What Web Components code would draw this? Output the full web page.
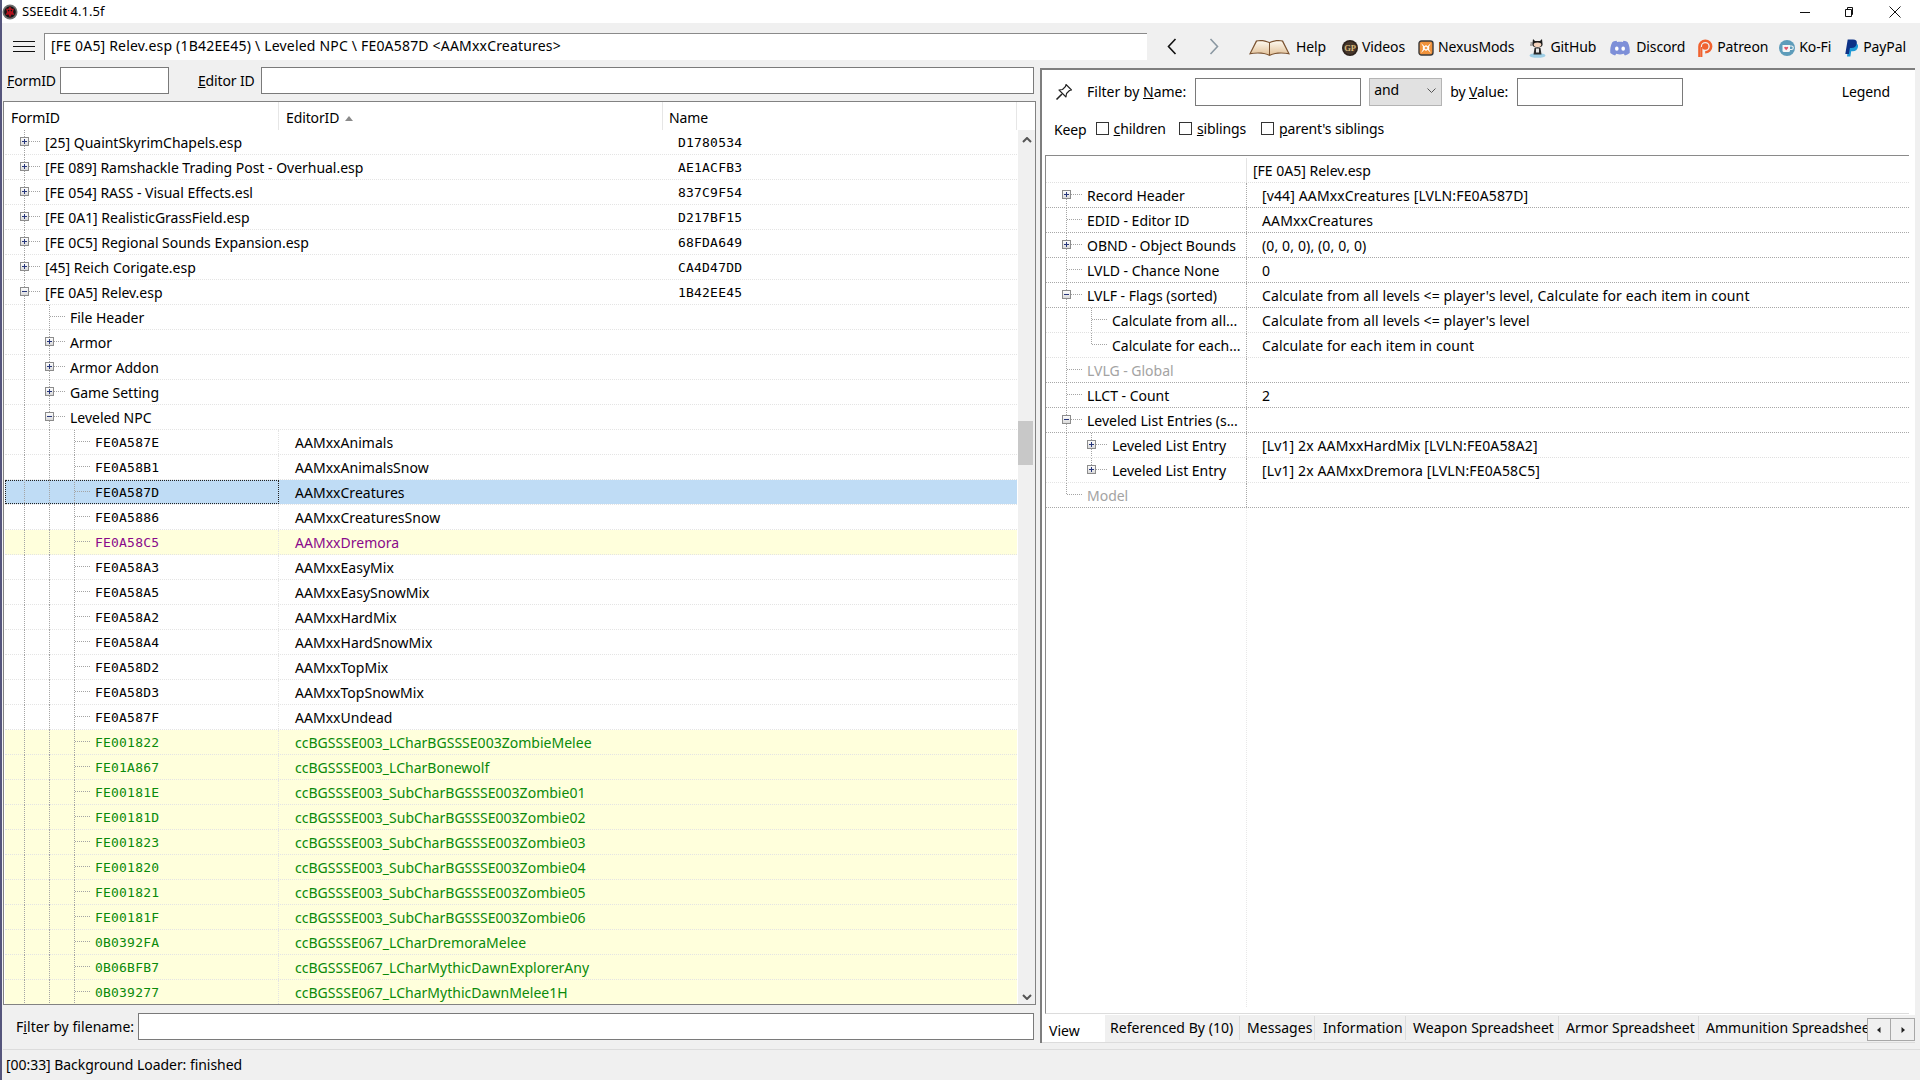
<!DOCTYPE html>
<html>
<head>
<meta charset="utf-8">
<title>SSEEdit</title>
<style>
  html, body { margin: 0; padding: 0; height: 100%; overflow: hidden; background: #f0f0f0; }
  body { font: 14px/1.2 "Noto Sans", "Open Sans", sans-serif; color: #000; letter-spacing: -0.12px; }
</style>
</head>
<body>
<sse-app></sse-app>

<script>
const BOX = (sign) => `<svg width="9" height="9" viewBox="0 0 9 9" style="display:block">
  <defs><linearGradient id="g" x1="0" y1="0" x2="0" y2="1"><stop offset="0" stop-color="#fff"/><stop offset="1" stop-color="#d8d8d8"/></linearGradient></defs>
  <rect x=".5" y=".5" width="8" height="8" fill="url(#g)" stroke="#8c8c8c"/>
  <path d="M2 4.500h5${sign === '+' ? 'M4.500 2v5' : ''}" stroke="#27367a" fill="none"/></svg>`;

// one level of tree connectors, used by both trees
class TreeIndent extends HTMLElement {
  connectedCallback() {
    const guides = (this.getAttribute('guides') || '').split(' ').filter(Boolean);
    const exp = this.getAttribute('exp');
    const end = this.hasAttribute('end');
    const top = this.hasAttribute('top');
    const pad = this.getAttribute('pad') || '15';
    const color = this.getAttribute('line') || '#a4a4a4';
    this.attachShadow({ mode: 'open' });
    this.shadowRoot.innerHTML = `
      <style>
        :host { display: flex; height: 100%; flex: none; padding-left: ${pad}px; }
        .cell { width: 25px; height: 100%; position: relative; flex: none; }
        .v { position: absolute; left: 4px; top: 0; bottom: -1px; border-left: 1px dotted ${color}; }
        .v.half { bottom: 13px; }
        .v.low { top: 11px; }
        .h { position: absolute; left: 5px; top: 11px; width: 15px; border-top: 1px dotted ${color}; }
        .box { position: absolute; left: 0; top: 7px; }
      </style>
      ${guides.map(g => `<div class="cell">${g === '1' ? '<div class="v"></div>' : ''}</div>`).join('')}
      <div class="cell">
        <div class="v ${end ? 'half' : ''} ${top ? 'low' : ''}"></div>
        <div class="h"></div>
        ${exp ? `<div class="box">${BOX(exp)}</div>` : ''}
      </div>`;
  }
}
customElements.define('tree-indent', TreeIndent);

class ToolLink extends HTMLElement {
  connectedCallback() {
    this.attachShadow({ mode: 'open' });
    this.shadowRoot.innerHTML = `
      <style>
        :host { display: flex; align-items: center; gap: var(--gap, 4px); height: 100%; flex: none; }
        ::slotted(svg) { display: block; flex: none; }
      </style>
      <slot name="icon"></slot><slot></slot>`;
  }
}
customElements.define('tool-link', ToolLink);

class CheckOption extends HTMLElement {
  connectedCallback() {
    this.attachShadow({ mode: 'open' });
    this.shadowRoot.innerHTML = `
      <style>
        :host { display: flex; align-items: center; gap: 5px; flex: none; }
        i { display: block; width: 11px; height: 11px; border: 1px solid #333; background: #fff; }
      </style>
      <i></i><span><slot></slot></span>`;
  }
}
customElements.define('check-option', CheckOption);

class TitleBar extends HTMLElement {
  connectedCallback() {
    this.attachShadow({ mode: 'open' });
    this.shadowRoot.innerHTML = `
      <style>
        :host { display: flex; align-items: center; height: 23px; background: #fff; flex: none; font-size: 13px; letter-spacing: .05px; }
        .logo { margin-right: 4px; flex: none; display: block; }
        .title { flex: 1; }
        .caps { display: flex; align-items: center; }
        .caps svg { display: block; }
      </style>
      <svg class="logo" width="16" height="16" viewBox="0 0 16 16">
        <circle cx="8" cy="8" r="7.500" fill="#6e6e6e"/>
        <circle cx="8" cy="8" r="5.800" fill="#161616"/>
        <path d="M8 2.500 10 5 12 4.500 11 8 12.500 11 9.500 10.500 8 13.500 6.500 10.500 3.500 11 5 8 4 4.500 6 5Z" fill="#b3121d"/>
        <circle cx="6.600" cy="6.600" r=".8" fill="#111"/><circle cx="9.400" cy="6.600" r=".8" fill="#111"/>
      </svg>
      <div class="title">SSEEdit 4.1.5f</div>
      <div class="caps">
        <svg width="12" height="12" viewBox="0 0 12 12" style="margin-right:32px"><path d="M1 6.500h10" stroke="#111" fill="none"/></svg>
        <svg width="12" height="12" viewBox="0 0 12 12" style="margin-right:34px"><path d="M2.500 3.500h6v7h-6zM4.500 3.500v-2h5v7h-1" stroke="#111" fill="none"/></svg>
        <svg width="12" height="12" viewBox="0 0 12 12" style="margin-right:19px"><path d="M.5.5l11 11M11.500.5l-11 11" stroke="#111" fill="none"/></svg>
      </div>`;
  }
}
customElements.define('title-bar', TitleBar);

class MainToolbar extends HTMLElement {
  connectedCallback() {
    this.attachShadow({ mode: 'open' });
    this.shadowRoot.innerHTML = `
      <style>
        :host { display: flex; align-items: flex-start; height: 44px; flex: none; background: #f0f0f0; }
        .burger { width: 22px; height: 11px; margin: 18px 9px 0 11px; border-top: 1px solid #111; border-bottom: 1px solid #111; position: relative; flex: none; box-sizing: border-box; }
        .burger::after { content: ""; position: absolute; left: 0; right: 0; top: 4px; border-top: 1px solid #111; }
        .path { width: 1103px; height: 27px; margin-top: 10px; box-sizing: border-box; background: #fff; border-top: 1px solid #8a8a8a; border-left: 1px solid #8a8a8a; padding-left: 6px; line-height: 23px; flex: none; letter-spacing: .19px; }
        .nav { display: block; margin-top: 15px; flex: none; }
        .links { display: flex; height: 44px; align-items: center; padding-top: 5px; box-sizing: border-box; }
      </style>
      <div class="burger"></div>
      <div class="path">[FE 0A5] Relev.esp (1B42EE45) \\ Leveled NPC \\ FE0A587D &lt;AAMxxCreatures&gt;</div>
      <svg class="nav" style="margin-left:20px" width="10" height="17" viewBox="0 0 10 17"><path d="M8.500 1 1.500 8.500l7 7.500" fill="none" stroke="#111" stroke-width="1.600"/></svg>
      <svg class="nav" style="margin-left:32px" width="10" height="17" viewBox="0 0 10 17"><path d="M1.500 1l7 7.500-7 7.500" fill="none" stroke="#8b98a2" stroke-width="1.600"/></svg>
      <div class="links" style="margin-left:29px"><slot></slot></div>`;
  }
}
customElements.define('main-toolbar', MainToolbar);

const FORM_ROWS = [
  [0, '+', '[25] QuaintSkyrimChapels.esp', '', 'D1780534'],
  [0, '+', '[FE 089] Ramshackle Trading Post - Overhual.esp', '', 'AE1ACFB3'],
  [0, '+', '[FE 054] RASS - Visual Effects.esl', '', '837C9F54'],
  [0, '+', '[FE 0A1] RealisticGrassField.esp', '', 'D217BF15'],
  [0, '+', '[FE 0C5] Regional Sounds Expansion.esp', '', '68FDA649'],
  [0, '+', '[45] Reich Corigate.esp', '', 'CA4D47DD'],
  [0, '-', '[FE 0A5] Relev.esp', '', '1B42EE45'],
  [1, '', 'File Header'],
  [1, '+', 'Armor'],
  [1, '+', 'Armor Addon'],
  [1, '+', 'Game Setting'],
  [1, '-', 'Leveled NPC'],
  [2, '', 'FE0A587E', 'AAMxxAnimals'],
  [2, '', 'FE0A58B1', 'AAMxxAnimalsSnow'],
  [2, '', 'FE0A587D', 'AAMxxCreatures', '', 'sel'],
  [2, '', 'FE0A5886', 'AAMxxCreaturesSnow'],
  [2, '', 'FE0A58C5', 'AAMxxDremora', '', 'purple'],
  [2, '', 'FE0A58A3', 'AAMxxEasyMix'],
  [2, '', 'FE0A58A5', 'AAMxxEasySnowMix'],
  [2, '', 'FE0A58A2', 'AAMxxHardMix'],
  [2, '', 'FE0A58A4', 'AAMxxHardSnowMix'],
  [2, '', 'FE0A58D2', 'AAMxxTopMix'],
  [2, '', 'FE0A58D3', 'AAMxxTopSnowMix'],
  [2, '', 'FE0A587F', 'AAMxxUndead'],
  [2, '', 'FE001822', 'ccBGSSSE003_LCharBGSSSE003ZombieMelee', '', 'green'],
  [2, '', 'FE01A867', 'ccBGSSSE003_LCharBonewolf', '', 'green'],
  [2, '', 'FE00181E', 'ccBGSSSE003_SubCharBGSSSE003Zombie01', '', 'green'],
  [2, '', 'FE00181D', 'ccBGSSSE003_SubCharBGSSSE003Zombie02', '', 'green'],
  [2, '', 'FE001823', 'ccBGSSSE003_SubCharBGSSSE003Zombie03', '', 'green'],
  [2, '', 'FE001820', 'ccBGSSSE003_SubCharBGSSSE003Zombie04', '', 'green'],
  [2, '', 'FE001821', 'ccBGSSSE003_SubCharBGSSSE003Zombie05', '', 'green'],
  [2, '', 'FE00181F', 'ccBGSSSE003_SubCharBGSSSE003Zombie06', '', 'green'],
  [2, '', '0B0392FA', 'ccBGSSSE067_LCharDremoraMelee', '', 'green'],
  [2, '', '0B06BFB7', 'ccBGSSSE067_LCharMythicDawnExplorerAny', '', 'green'],
  [2, '', '0B039277', 'ccBGSSSE067_LCharMythicDawnMelee1H', '', 'green'],
];

class FormTree extends HTMLElement {
  connectedCallback() {
    const rows = FORM_ROWS.map(([lvl, exp, a, b, c, kind]) => {
      const guides = Array(lvl).fill('1').join(' ');
      return `<div class="row ${kind || ''} ${lvl === 2 ? 'rec' : ''}">
        <div class="c1"><tree-indent guides="${guides}" ${exp ? `exp="${exp}"` : ''}></tree-indent><span class="${lvl === 2 ? 'mono' : ''}">${a}</span></div>
        <div class="c2">${b || ''}</div>
        <div class="c3">${c || ''}</div>
      </div>`;
    }).join('');
    this.attachShadow({ mode: 'open' });
    this.shadowRoot.innerHTML = `
      <style>
        :host { display: flex; flex-direction: column; flex: 1; min-height: 0; border: 1px solid #828282; background: #fff; position: relative; overflow: hidden; }
        .head { display: flex; height: 28px; flex: none; line-height: 31px; padding-left: 1px; }
        .head div { box-sizing: border-box; border-right: 1px solid #e6e6e6; flex: none; height: 28px; }
        .head .h1 { width: 274px; padding-left: 6px; }
        .head .h2 { width: 384px; padding-left: 7px; }
        .head .h3 { width: 354px; padding-left: 6px; }
        .sort { display: inline-block; width: 0; height: 0; border: 4.500px solid transparent; border-top: 0; border-bottom: 5px solid #8a8a8a; margin: 0 0 2px 6px; }
        .body { flex: 1; min-height: 0; display: flex; }
        .list { width: 1013px; flex: none; overflow: hidden; padding-left: 1px; box-sizing: border-box; }
        .row { display: flex; height: 25px; box-sizing: border-box; border-bottom: 1px dotted #e4e4e4; line-height: 26px; white-space: nowrap; }
        .c1 { width: 274px; flex: none; display: flex; box-sizing: border-box; letter-spacing: -.02px; }
        .c2 { width: 384px; flex: none; box-sizing: border-box; padding-left: 16px; letter-spacing: .02px; }
        .c3 { flex: 1; box-sizing: border-box; padding-left: 15px; font: 13px/25px "DejaVu Sans Mono", "Liberation Mono", monospace; letter-spacing: .2px; }
        .rec .c1 { border-right: 1px dotted #e4e4e4; }
        .mono { font: 13px/25px "DejaVu Sans Mono", "Liberation Mono", monospace; letter-spacing: .2px; }
        .sel .c2, .sel .c3 { background: #bfdcf5; }
        .sel .c1 { background: #bfdcf5; outline: 1px dotted #222; outline-offset: -1px; }
        .purple, .green { background: #ffffdc; }
        .purple { color: #8a0a8a; }
        .green { color: #0a8a0a; }
        .bar { width: 17px; flex: none; margin-left: 1px; background: #f0f0f0; display: flex; flex-direction: column; align-items: center; position: relative; }
        .bar svg { display: block; flex: none; }
        .thumb { position: absolute; left: 0; width: 15px; top: 291px; height: 44px; background: #c8c8c8; }
      </style>
      <div class="head">
        <div class="h1">FormID</div>
        <div class="h2">EditorID<span class="sort"></span></div>
        <div class="h3">Name</div>
      </div>
      <div class="body">
        <div class="list">${rows}</div>
        <div class="bar">
          <svg style="margin-top:7px" width="10" height="6" viewBox="0 0 10 6"><path d="M1 5l4-4 4 4" fill="none" stroke="#555" stroke-width="2"/></svg>
          <div class="thumb"></div>
          <div style="flex:1"></div>
          <svg style="margin-bottom:4px" width="10" height="6" viewBox="0 0 10 6"><path d="M1 1l4 4 4-4" fill="none" stroke="#555" stroke-width="2"/></svg>
        </div>
      </div>`;
  }
}
customElements.define('form-tree', FormTree);

class LeftPane extends HTMLElement {
  connectedCallback() {
    this.attachShadow({ mode: 'open' });
    this.shadowRoot.innerHTML = `
      <style>
        :host { display: flex; flex-direction: column; width: 1034px; flex: none; padding-left: 1px; box-sizing: border-box; }
        .top, .bot { display: flex; align-items: center; height: 27px; flex: none; }
        .top { margin-bottom: 7px; }
        .bot { margin: 8px 0 9px; letter-spacing: .05px; }
        .top span, .bot span { padding-top: 2px; }
        input { display: block; box-sizing: border-box; height: 27px; border: 1px solid #7a7a7a; background: #fff; margin: 0; padding: 0; flex: none; }
        u { text-underline-offset: 1px; }
      </style>
      <div class="top">
        <span style="margin-left:4px"><u>F</u>ormID</span>
        <input style="width:109px;margin-left:4px">
        <span style="margin-left:29px"><u>E</u>ditor ID</span>
        <input style="width:773px;margin-left:6px">
      </div>
      <form-tree></form-tree>
      <div class="bot">
        <span style="margin-left:13px">F<u>i</u>lter by filename:</span>
        <input style="width:896px;margin-left:4px">
      </div>`;
  }
}
customElements.define('left-pane', LeftPane);

const RECORD_ROWS = [
  ['h', '', '', '', '[FE 0A5] Relev.esp'],
  [0, '+', 'Record Header', 'top', '[v44] AAMxxCreatures [LVLN:FE0A587D]'],
  [0, '', 'EDID - Editor ID', '', 'AAMxxCreatures'],
  [0, '+', 'OBND - Object Bounds', '', '(0, 0, 0), (0, 0, 0)'],
  [0, '', 'LVLD - Chance None', '', '0'],
  [0, '-', 'LVLF - Flags (sorted)', '', "Calculate from all levels <= player's level, Calculate for each item in count"],
  [1, '', 'Calculate from all...', '', "Calculate from all levels <= player's level"],
  [1, '', 'Calculate for each...', 'end', 'Calculate for each item in count'],
  [0, '', 'LVLG - Global', 'off', ''],
  [0, '', 'LLCT - Count', '', '2'],
  [0, '-', 'Leveled List Entries (s...', '', ''],
  [1, '+', 'Leveled List Entry', '', '[Lv1] 2x AAMxxHardMix [LVLN:FE0A58A2]'],
  [1, '+', 'Leveled List Entry', 'end', '[Lv1] 2x AAMxxDremora [LVLN:FE0A58C5]'],
  [0, '', 'Model', 'end off', ''],
];

class RecordView extends HTMLElement {
  connectedCallback() {
    const esc = s => s.replace(/&/g, '&amp;').replace(/</g, '&lt;');
    const rows = RECORD_ROWS.map(([lvl, exp, label, flags, value]) => {
      if (lvl === 'h') return `<div class="row head"><div class="k"></div><div class="val hv">${esc(value)}</div></div>`;
      const top = flags.includes('top') ? 'top' : '';
      const end = flags.includes('end') ? 'end' : '';
      const off = flags.includes('off') ? 'off' : '';
      const guides = lvl ? '1' : '';
      return `<div class="row ${lvl ? 'kid' : ''} ${off}">
        <div class="k"><tree-indent pad="12" guides="${guides}" ${exp ? `exp="${exp}"` : ''} ${top} ${end}></tree-indent><span>${esc(label)}</span></div>
        <div class="val">${esc(value)}</div>
      </div>`;
    }).join('');
    this.attachShadow({ mode: 'open' });
    this.shadowRoot.innerHTML = `
      <style>
        :host { display: flex; flex-direction: column; flex: 1; min-height: 0; border-top: 1px solid #8a8a8a; border-left: 1px solid #8a8a8a; border-bottom: 1px solid #dcdcdc; margin: 0 6px 0 3px; padding-top: 2px; background: #fff; }
        .row { display: flex; height: 25px; box-sizing: border-box; flex: none; line-height: 26px; border-bottom: 1px dotted #a8a8a8; white-space: nowrap; }
        .row.kid, .row.head { border-bottom-color: #e0e0e0; }
        .row:nth-child(14) { border-bottom-color: #e4e4e4; }
        .k { width: 201px; flex: none; display: flex; box-sizing: border-box; border-right: 1px dotted #a8a8a8; overflow: hidden; padding-left: 4px; letter-spacing: -.02px; }
        .head .k { border-right: 1px solid #e4e4e4; }
        .val { padding-left: 15px; flex: 1; letter-spacing: .13px; }
        .val.hv { padding-left: 6px; letter-spacing: 0; }
        .off { color: #a3a3a3; }
        .fill { flex: 1; margin-bottom: 6px; }
        .fill div { width: 201px; height: 100%; box-sizing: border-box; border-right: 1px dotted #e8e8e8; }
      </style>
      ${rows}
      <div class="fill"><div></div></div>`;
  }
}
customElements.define('record-view', RecordView);

class TabStrip extends HTMLElement {
  connectedCallback() {
    const tabs = [['View', 63, 7], ['Referenced By (10)', 135, 5], ['Messages', 75, 7], ['Information', 91, 8], ['Weapon Spreadsheet', 153, 7], ['Armor Spreadsheet', 140, 7], ['Ammunition Spreadsheet', 168, 7]];
    this.attachShadow({ mode: 'open' });
    this.shadowRoot.innerHTML = `
      <style>
        :host { display: flex; height: 28px; flex: none; background: #f0f0f0; border-bottom: 1px solid #dcdcdc; box-sizing: border-box; margin-top: 1px; letter-spacing: .04px; }
        .tab { box-sizing: border-box; flex: none; height: 24px; margin-top: 1px; line-height: 24px; border-right: 1px solid #dcdcdc; white-space: nowrap; overflow: hidden; }
        .tab.on { background: #fff; height: 27px; margin-top: 0; line-height: 32px; border-right: 0; }
        .tab:last-of-type { border-right: 0; }
        .tabs { display: flex; width: 825px; flex: none; overflow: hidden; }
        .btn { width: 24px; height: 23px; box-sizing: border-box; margin-top: 3px; border: 1px solid #a8a8a8; background: #f0f0f0; display: flex; align-items: center; justify-content: center; flex: none; }
        .btn + .btn { border-left: 0; }
      </style>
      <div class="tabs">
        ${tabs.map(([t, w, p], i) => `<div class="tab ${i ? '' : 'on'}" style="width:${w}px;padding-left:${p}px">${t}</div>`).join('')}
      </div>
      <div class="btn"><svg width="4" height="6" viewBox="0 0 4 6"><path d="M3.500 0v6L0 3z" fill="#222"/></svg></div>
      <div class="btn"><svg width="4" height="6" viewBox="0 0 4 6"><path d="M.5 0v6L4 3z" fill="#222"/></svg></div>`;
  }
}
customElements.define('tab-strip', TabStrip);

class RightPane extends HTMLElement {
  connectedCallback() {
    this.attachShadow({ mode: 'open' });
    this.shadowRoot.innerHTML = `
      <style>
        :host { display: flex; flex-direction: column; width: 875px; flex: none; margin: 1px 0 6px 4px; box-sizing: border-box; border-left: 2px solid #7e7e7e; border-top: 2px solid #7e7e7e; background: #fff; }
        .filter { display: flex; align-items: center; height: 35px; margin-top: 4px; flex: none; }
        .filter span { padding-top: 2px; }
        .keep { display: flex; align-items: center; height: 24px; margin: 8px 0 14px; flex: none; }
        input { display: block; box-sizing: border-box; height: 28px; border: 1px solid #7a7a7a; background: #fff; margin: 0; padding: 0; flex: none; }
        .select { box-sizing: border-box; width: 73px; height: 28px; border: 1px solid #b4b4b4; background: #e1e1e1; display: flex; align-items: center; justify-content: space-between; padding: 0 5px 3px 4px; margin-left: 8px; flex: none; }
        .select span { padding-top: 0; }
        .pin { display: block; flex: none; }
        .legend { margin-left: auto; margin-right: 25px; }
        u { text-underline-offset: 1px; }
      </style>
      <div class="filter">
        <svg class="pin" style="margin-left:13px" width="18" height="18" viewBox="0 0 18 18">
          <path d="M11 1.500 16.500 7 14.500 7.500 11.500 10.500 11 14 4 7 7.500 6.500 10.500 3.500Z" fill="#fff" stroke="#222" stroke-width="1.100" stroke-linejoin="round"/>
          <path d="M7 11 1.500 16.500" stroke="#222" stroke-width="1.600" fill="none"/>
        </svg>
        <span style="margin-left:14px;letter-spacing:0">Filter by <u>N</u>ame:</span>
        <input style="width:166px;margin-left:9px">
        <div class="select"><span>and</span><svg width="9" height="5" viewBox="0 0 9 5"><path d="M.5.5l4 4 4-4" fill="none" stroke="#555"/></svg></div>
        <span style="margin-left:8px">by <u>V</u>alue:</span>
        <input style="width:166px;margin-left:9px">
        <span class="legend">Legend</span>
      </div>
      <div class="keep">
        <span style="margin-left:12px;padding-top:3px">Keep</span>
        <check-option style="margin-left:9px"><u>c</u>hildren</check-option>
        <check-option style="margin-left:13px"><u>s</u>iblings</check-option>
        <check-option style="margin-left:15px"><u>p</u>arent's siblings</check-option>
      </div>
      <record-view></record-view>
      <tab-strip></tab-strip>`;
  }
}
customElements.define('right-pane', RightPane);

class StatusBar extends HTMLElement {
  connectedCallback() {
    this.attachShadow({ mode: 'open' });
    this.shadowRoot.innerHTML = `
      <style>
        :host { display: flex; align-items: center; height: 31px; flex: none; margin-left: 1px; border-top: 1px solid #dcdcdc; box-sizing: border-box; padding-left: 3px; background: #f0f0f0; letter-spacing: -.05px; }
      </style>
      <slot></slot>`;
  }
}
customElements.define('status-bar', StatusBar);

class SseApp extends HTMLElement {
  connectedCallback() {
    this.attachShadow({ mode: 'open' });
    this.shadowRoot.innerHTML = `
      <style>
        :host { display: flex; flex-direction: column; height: 1080px; box-sizing: border-box; border-left: 2px solid #55557c; background: #f0f0f0; }
        .main { display: flex; flex: 1; min-height: 0; }
      </style>
      <title-bar></title-bar>
      <main-toolbar>
        <tool-link style="--gap:5px">
          <svg slot="icon" width="43" height="18" viewBox="0 0 43 18">
            <defs><linearGradient id="pg" x1="0" y1="0" x2="0" y2="1"><stop offset="0" stop-color="#fdf8ee"/><stop offset="1" stop-color="#e2c29a"/></linearGradient></defs>
            <path d="M21.500 3C17 .5 11 .5 8 1.500L1 15.500C8 14 16 14 21.500 17 27 14 35 14 42 15.500L35 1.500C32 .5 26 .5 21.500 3Z" fill="#7a5230"/>
            <path d="M21 4C17 2 12 1.800 9 2.500L3 14C9 13 16 13 21 15.500Z" fill="url(#pg)"/>
            <path d="M22 4C26 2 31 1.800 34 2.500L40 14C34 13 27 13 22 15.500Z" fill="url(#pg)"/>
          </svg>
          Help
        </tool-link>
        <tool-link style="margin-left:16px">
          <svg slot="icon" width="16" height="16" viewBox="0 0 16 16">
            <circle cx="8" cy="8" r="8" fill="#2c221c"/><circle cx="8" cy="8" r="6.400" fill="#46362a"/>
            <text x="8" y="11" text-anchor="middle" font-family="Liberation Serif, serif" font-size="8.500" font-weight="700" fill="#d8b878">GP</text>
          </svg>
          Videos
        </tool-link>
        <tool-link style="margin-left:13px">
          <svg slot="icon" width="16" height="16" viewBox="0 0 16 16">
            <rect x="1" y="1" width="14" height="14" rx="2.500" fill="#f0923a" stroke="#3a3a3a" stroke-width="1.400"/>
            <path d="M3 3 6.500 6.200 8 5 9.500 6.200 13 3 10.800 7 11.500 8 10.800 9 13 13 9.500 9.800 8 11 6.500 9.800 3 13 5.200 9 4.500 8 5.200 7Z" fill="#fff"/>
            <path d="M6.400 8 8 6.400 9.600 8 8 9.600Z" fill="#f0923a"/>
          </svg>
          NexusMods
        </tool-link>
        <tool-link style="margin-left:15px">
          <svg slot="icon" width="17" height="20" viewBox="0 0 17 20">
            <ellipse cx="8.500" cy="17.500" rx="8" ry="2.300" fill="#9fcfe6"/>
            <path d="M4 1 6 3h5l2-2 .6 5.500c0 2-2 3.200-5.100 3.200S3.400 8.500 3.400 6.500Z" fill="#1c1c1c"/>
            <ellipse cx="8.500" cy="6.800" rx="3.800" ry="2.300" fill="#f3d3bd"/>
            <path d="M5.500 10h6l1 6.500h-8Z" fill="#2a2a2a"/>
            <path d="M7 10.500h3v4H7Z" fill="#e8e8e8"/>
            <path d="M1.500 5h2.500M1 7h2.500" stroke="#666" fill="none"/>
          </svg>
          GitHub
        </tool-link>
        <tool-link style="margin-left:14px;--gap:6px">
          <svg slot="icon" width="20" height="16" viewBox="0 0 20 16">
            <path d="M6.500 .8C4.500 1 3 1.600 2.300 2.300.5 5.500 0 9.500 .3 13c1.400 1.200 3 2 4.800 2.500l1.200-1.800c3 .9 4.400.9 7.400 0l1.200 1.800c1.800-.5 3.400-1.300 4.800-2.500.3-3.500-.2-7.500-2-10.700C17 1.600 15.500 1 13.500.8l-.7 1.200c-1.800-.2-3.800-.2-5.600 0Z" fill="#7d8fd8"/>
            <ellipse cx="6.800" cy="8.700" rx="1.800" ry="2.100" fill="#fff"/><ellipse cx="13.200" cy="8.700" rx="1.800" ry="2.100" fill="#fff"/>
          </svg>
          Discord
        </tool-link>
        <tool-link style="margin-left:12px">
          <svg slot="icon" width="16" height="20" viewBox="0 0 16 20">
            <path d="M2.500 19V8.500A5.800 5.800 0 1 1 8.200 14.300" fill="none" stroke="#f0622f" stroke-width="2.600"/>
            <circle cx="8.200" cy="8.500" r="3.200" fill="#f0622f"/>
            <path d="M4.700 19V9" stroke="#f0622f" stroke-width="1.400" fill="none"/>
          </svg>
          Patreon
        </tool-link>
        <tool-link style="margin-left:11px">
          <svg slot="icon" width="16" height="16" viewBox="0 0 16 16">
            <circle cx="8" cy="8" r="8" fill="#5d9cba"/>
            <path d="M3.500 5h7.500v5.500a1.500 1.500 0 0 1-1.500 1.500H5a1.500 1.500 0 0 1-1.500-1.500Z" fill="#f4f6f6"/>
            <path d="M11 6h1.500a1.200 1.200 0 0 1 0 3.500H11" fill="none" stroke="#f4f6f6" stroke-width="1.100"/>
            <path d="M7.200 10.300 5.400 8.300c-.8-1.100.8-2.300 1.800-1 1-1.300 2.600-.1 1.800 1Z" fill="#e0556a"/>
          </svg>
          Ko-Fi
        </tool-link>
        <tool-link style="margin-left:14px">
          <svg slot="icon" width="14" height="18" viewBox="0 0 14 18">
            <path d="M3.800 4H9c2.800 0 4.500 1.400 4 4-.5 2.800-2.600 4.200-5.200 4.200H6.200L5.400 17.500H2Z" fill="#1f9ad6"/>
            <path d="M2.700 .5H8c2.900 0 4.300 1.500 3.800 4-.5 3-2.600 4.500-5.400 4.500H4.900L3.900 15H.3Z" fill="#0d3287"/>
          </svg>
          PayPal
        </tool-link>
      </main-toolbar>
      <div class="main">
        <left-pane></left-pane>
        <right-pane></right-pane>
      </div>
      <status-bar>[00:33] Background Loader: finished</status-bar>`;
  }
}
customElements.define('sse-app', SseApp);
</script>
</body>
</html>
